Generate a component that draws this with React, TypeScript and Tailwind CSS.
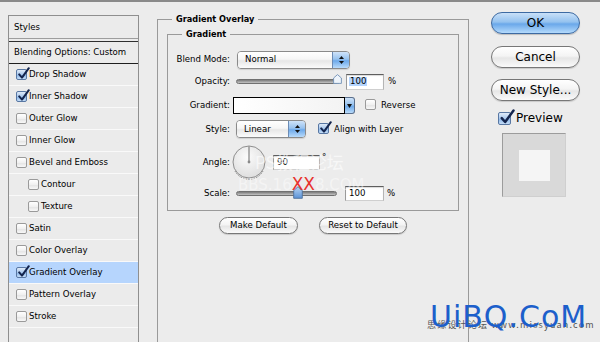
import React from "react";

function Check({ checked, big }: { checked?: boolean; big?: boolean }) {
  const size = big ? "w-[13px] h-[13px]" : "w-[11px] h-[11px]";
  const skin = checked
    ? "border-[#5877a3] bg-[linear-gradient(to_bottom,#dfeaf8_0%,#a9c9ee_50%,#8db8ea_55%,#c4ddf7_100%)]"
    : "border-[#9a9a9a] bg-[linear-gradient(to_bottom,#ffffff_0%,#f1f1f1_50%,#e4e4e4_55%,#f8f8f8_100%)]";
  return (
    <span className={`relative inline-block shrink-0 rounded-[2px] border ${size} ${skin}`}>
      {checked && (
        <svg
          className={big ? "absolute left-[0px] top-[-4px] w-[16px] h-[16px]" : "absolute left-[0px] top-[-3px] w-[13px] h-[13px]"}
          viewBox="0 0 13 13"
        >
          <path d="M2.2 7.4 L5 10.6 L11.8 1.2" stroke="#13244d" strokeWidth="2" fill="none" strokeLinecap="round" strokeLinejoin="round" />
        </svg>
      )}
    </span>
  );
}

function Stepper({ w }: { w: string }) {
  return (
    <div className={`${w} shrink-0 border-l border-[#6b8bb5] flex flex-col items-center justify-center gap-[2px] bg-[linear-gradient(to_bottom,#cfe3f9_0%,#97c2ee_45%,#6da9ea_55%,#b9dbfb_100%)]`}>
      <svg width="5" height="3" viewBox="0 0 5 3"><path d="M0 3 L2.5 0 L5 3 Z" fill="#111" /></svg>
      <svg width="5" height="3" viewBox="0 0 5 3"><path d="M0 0 L2.5 3 L5 0 Z" fill="#111" /></svg>
    </div>
  );
}

function Select({ value, className }: { value: string; className: string }) {
  return (
    <div className={`flex h-[18px] rounded-[4px] border border-[#8a8a8a] overflow-hidden shadow-[0_1px_1px_rgba(0,0,0,0.12)] ${className}`}>
      <div className="flex-1 flex items-center pl-[7px] bg-[linear-gradient(to_bottom,#ffffff_0%,#f6f6f6_45%,#e7e7e7_55%,#fbfbfb_100%)]">{value}</div>
      <Stepper w="w-[17px]" />
    </div>
  );
}

function Field({ value, className, selected }: { value: string; className: string; selected?: boolean }) {
  return (
    <div className={`flex items-center bg-white border border-t-[#5e5e5e] border-l-[#9a9a9a] border-r-[#b5b5b5] border-b-[#cfcfcf] shadow-[inset_0_1px_1px_rgba(0,0,0,0.15)] pl-[2px] ${className}`}>
      <span className={selected ? "bg-[#b4d4fd] px-[1px]" : "px-[1px]"}>{value}</span>
    </div>
  );
}

function Slider({ w, thumbLeft, filled }: { w: string; thumbLeft: string; filled?: boolean }) {
  return (
    <div className={`relative h-[5px] shrink-0 rounded-full border border-[#707070] bg-[linear-gradient(to_bottom,#7a7a7a,#a7a7a7_60%,#c4c4c4)] ${w}`}>
      <svg className={`absolute ${thumbLeft} ${filled ? "top-[-6px] w-[10px] h-[13px]" : "top-[-6px] w-[9px] h-[10px]"}`} viewBox={filled ? "0 0 10 13" : "0 0 9 10"}>
        {filled ? (
          <>
            <defs>
              <linearGradient id="th" x1="0" y1="0" x2="0" y2="1">
                <stop offset="0" stopColor="#b8d5f3" />
                <stop offset="1" stopColor="#5b92d6" />
              </linearGradient>
            </defs>
            <path d="M0.7 4.5 L5 0.7 L9.3 4.5 V12.3 H0.7 Z" fill="url(#th)" stroke="#4d6f9a" strokeWidth="0.9" />
          </>
        ) : (
          <path d="M0.6 4 L4.5 0.6 L8.4 4 V9.4 H0.6 Z" fill="#eef4fb" stroke="#7190b6" strokeWidth="0.9" />
        )}
      </svg>
    </div>
  );
}

function Pill({ children, className }: { children: React.ReactNode; className: string }) {
  return (
    <div className={`flex items-center justify-center rounded-full border border-[#777] bg-[linear-gradient(to_bottom,#ffffff_0%,#f4f4f4_45%,#e6e6e6_55%,#fafafa_100%)] shadow-[0_1px_1px_rgba(0,0,0,0.15)] ${className}`}>
      {children}
    </div>
  );
}

const items: { label: string; checked?: boolean; indent?: boolean; selected?: boolean }[] = [
  { label: "Drop Shadow", checked: true },
  { label: "Inner Shadow", checked: true },
  { label: "Outer Glow" },
  { label: "Inner Glow" },
  { label: "Bevel and Emboss" },
  { label: "Contour", indent: true },
  { label: "Texture", indent: true },
  { label: "Satin" },
  { label: "Color Overlay" },
  { label: "Gradient Overlay", checked: true, selected: true },
  { label: "Pattern Overlay" },
  { label: "Stroke" },
];

function StylesList() {
  return (
    <div className="ml-[8px] mt-[13px] w-[131px] h-[340px] shrink-0 border border-[#8f8f8f] bg-[#ebebeb]">
      <div className="h-[22px] pl-[5px] flex items-center">Styles</div>
      <div className="h-px bg-[#9d9d9d]" />
      <div className="h-[2px]" />
      <div className="h-px bg-[#2e2e2e]" />
      <div className="h-[21px] pl-[5px] flex items-center">Blending Options: Custom</div>
      <div className="h-px bg-[#1e1e1e]" />
      {items.map((it) => (
        <div
          key={it.label}
          className={`h-[22px] border-b border-[#f9f9f9] flex items-center gap-[2px] ${it.indent ? "pl-[19px]" : "pl-[7px]"} ${it.selected ? "bg-[#b6d5fd]" : ""}`}
        >
          <Check checked={it.checked} />
          <span>{it.label}</span>
        </div>
      ))}
    </div>
  );
}

function Label({ children }: { children: React.ReactNode }) {
  return <span className="w-[62px] shrink-0 text-right">{children}</span>;
}

function Dial() {
  return (
    <svg className="ml-[2px] shrink-0" width="34" height="38" viewBox="0 0 34 38">
      <defs>
        <radialGradient id="dg" cx="0.45" cy="0.35" r="0.7">
          <stop offset="0" stopColor="#fbfbfb" />
          <stop offset="1" stopColor="#dcdcdc" />
        </radialGradient>
      </defs>
      <path d="M3 25 A16 16 0 0 0 31 25" stroke="#7a7a7a" strokeWidth="1" fill="none" strokeDasharray="1.5 1.2" transform="translate(0 2)" />
      <circle cx="17" cy="18" r="16" fill="url(#dg)" stroke="#8e8e8e" strokeWidth="1" />
      <line x1="17" y1="18" x2="17" y2="2.5" stroke="#6a6a6a" strokeWidth="1" />
      <circle cx="17" cy="18" r="1.4" fill="#8a8a8a" />
    </svg>
  );
}

function MainPanel() {
  return (
    <fieldset className="ml-[18px] mt-[11px] w-[312px] h-[340px] shrink-0 border border-[#9a9a9a] px-[9px] min-w-0">
      <legend className="ml-[5px] px-[4px] font-bold text-[8.2px] leading-[12px]">Gradient Overlay</legend>
      <fieldset className="mt-[3px] border border-[#9a9a9a] pt-[9px] pb-[9px] min-w-0">
        <legend className="ml-[14px] px-[4px] font-bold text-[8.2px] leading-[12px]">Gradient</legend>
        <div className="h-[21px] flex items-center">
          <Label>Blend Mode:</Label>
          <Select value="Normal" className="ml-[7px] w-[113px]" />
        </div>
        <div className="h-[23px] flex items-center">
          <Label>Opacity:</Label>
          <Slider w="ml-[6px] w-[104px]" thumbLeft="left-[96px]" />
          <Field value="100" selected className="ml-[6px] w-[38px] h-[16px]" />
          <span className="ml-[4px]">%</span>
        </div>
        <div className="h-[25px] flex items-center">
          <Label>Gradient:</Label>
          <div className="ml-[3px] w-[112px] h-[17px] border-[1.5px] border-black bg-[linear-gradient(to_right,#ffffff,#f3f3f3)]" />
          <div className="w-[10px] h-[17px] rounded-r-[3px] border border-l-0 border-[#5a6f8c] flex items-center justify-center bg-[linear-gradient(to_bottom,#cfe3f9_0%,#97c2ee_45%,#6da9ea_55%,#b9dbfb_100%)]">
            <svg width="5" height="4" viewBox="0 0 5 4"><path d="M0 0 L2.5 4 L5 0 Z" fill="#111" /></svg>
          </div>
          <span className="ml-[10px]"><Check /></span>
          <span className="ml-[5px]">Reverse</span>
        </div>
        <div className="h-[22px] flex items-center">
          <Label>Style:</Label>
          <Select value="Linear" className="ml-[6px] w-[70px]" />
          <span className="ml-[12px]"><Check checked /></span>
          <span className="ml-[5px]">Align with Layer</span>
        </div>
        <div className="h-[45px] flex items-center">
          <Label>Angle:</Label>
          <Dial />
          <Field value="90" className="ml-[7px] w-[47px] h-[15px]" />
          <span className="ml-[2px] mb-[10px]">°</span>
        </div>
        <div className="h-[16px] flex items-center">
          <Label>Scale:</Label>
          <Slider w="ml-[6px] w-[101px]" thumbLeft="left-[56px]" filled />
          <Field value="100" className="ml-[8px] w-[39px] h-[15px]" />
          <span className="ml-[3px]">%</span>
        </div>
      </fieldset>
      <div className="mt-[6px] flex justify-center gap-[21px]">
        <Pill className="w-[79px] h-[17px]">Make Default</Pill>
        <Pill className="w-[88px] h-[17px]">Reset to Default</Pill>
      </div>
    </fieldset>
  );
}

function RightColumn() {
  return (
    <div className="ml-[22px] mt-[10px] w-[89px] shrink-0 flex flex-col text-[12px]">
      <div className="h-[22px] flex items-center justify-center rounded-full border border-[#3d6aa2] bg-[linear-gradient(to_bottom,#c9e0f8_0%,#94c2ef_45%,#6aa8ea_55%,#b4dafc_100%)] shadow-[0_1px_1px_rgba(0,0,0,0.2)]">
        OK
      </div>
      <Pill className="mt-[12px] h-[22px]">Cancel</Pill>
      <Pill className="mt-[11px] h-[22px]">New Style...</Pill>
      <div className="mt-[10px] ml-[7px] h-[14px] flex items-center">
        <Check checked big />
        <span className="ml-[5px]">Preview</span>
      </div>
      <div className="mt-[8px] ml-[11px] w-[64px] h-[64px] bg-[#d9d9d9] border border-t-[#9c9c9c] border-l-[#9c9c9c] border-r-[#cfcfcf] border-b-[#cfcfcf] flex items-center justify-center">
        <div className="w-[31px] h-[31px] bg-[#f5f5f5]" />
      </div>
    </div>
  );
}

function Watermarks() {
  return (
    <>
      <div className="absolute left-[255px] top-[151px] text-[17px] leading-none text-white opacity-60 font-['Noto_Sans_CJK_SC',sans-serif] whitespace-nowrap">
        PS教程论坛
      </div>
      <div className="absolute left-[238px] top-[174px] text-[15px] leading-none whitespace-nowrap font-['DejaVu_Sans',sans-serif]">
        <span className="text-white opacity-45">BBS.16</span>
        <span className="text-[#e8302c] text-[17px]">XX</span>
        <span className="text-white opacity-45">8.COM</span>
      </div>
      <div className="absolute left-[427px] top-[318px] text-[9px] leading-none tracking-[1.2px] text-[#555] whitespace-nowrap font-['Noto_Sans_CJK_SC',sans-serif]">
        思缘设计论坛 www.missyuan.com
      </div>
      <div className="absolute left-[430px] top-[300px] text-[30px] leading-none tracking-[1px] text-[#1c5fcb] whitespace-nowrap font-['DejaVu_Sans',sans-serif]">
        UiBQ.CoM
      </div>
    </>
  );
}

export default function App() {
  return (
    <div className="relative w-[600px] h-[342px] overflow-hidden bg-[#ececec] border-t-2 border-[#8a8a8a] font-['DejaVu_Sans',sans-serif] text-[8.6px] leading-none text-black">
      <div className="flex items-start">
        <StylesList />
        <MainPanel />
        <RightColumn />
      </div>
      <Watermarks />
    </div>
  );
}
